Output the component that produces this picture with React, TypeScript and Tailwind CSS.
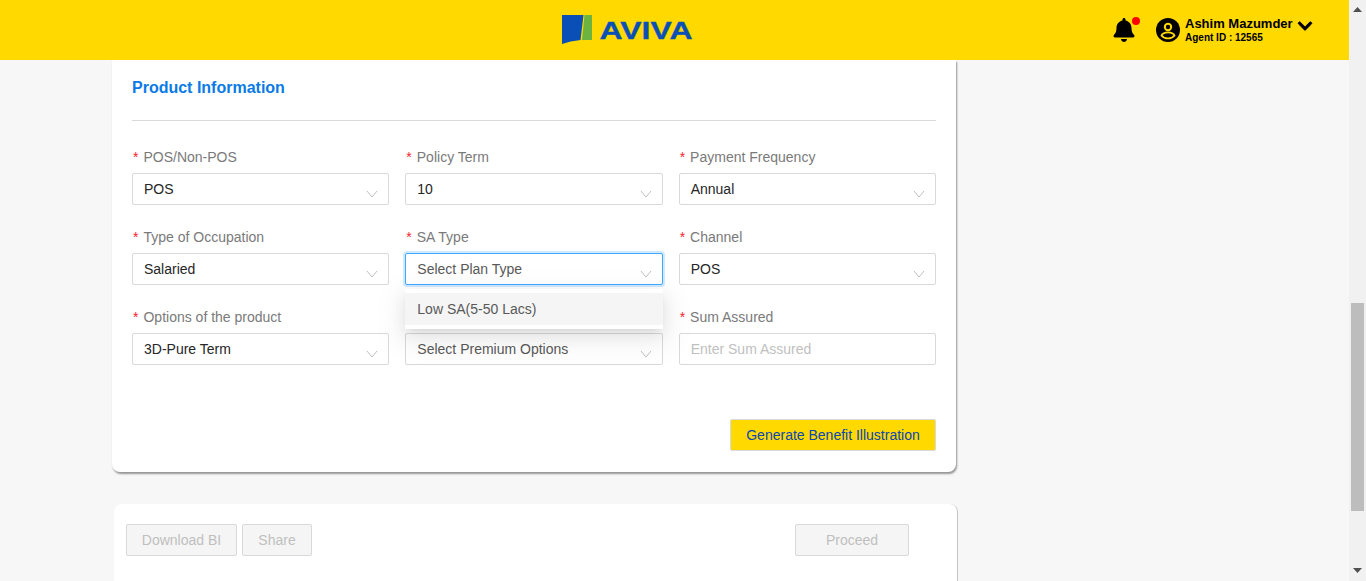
import { FaBell, FaChevronDown } from "react-icons/fa";

type Field = {
  label?: string;
  value: string;
  placeholder?: boolean;
  focused?: boolean;
  input?: boolean;
};

const fields: Field[] = [
  { label: "POS/Non-POS", value: "POS" },
  { label: "Policy Term", value: "10" },
  { label: "Payment Frequency", value: "Annual" },
  { label: "Type of Occupation", value: "Salaried" },
  { label: "SA Type", value: "Select Plan Type", placeholder: true, focused: true },
  { label: "Channel", value: "POS" },
  { label: "Options of the product", value: "3D-Pure Term" },
  // label sits behind the open dropdown
  { value: "Select Premium Options", placeholder: true },
  { label: "Sum Assured", value: "Enter Sum Assured", input: true },
];

function Logo() {
  return (
    <svg width="132" height="32" viewBox="0 0 132 32" className="block">
      <path d="M1 1 H22.5 L19.5 26 Q9 27 1 30 Z" fill="#0a4fb5" />
      <path d="M23.5 1 H31 V26 H21 Z" fill="#6cb33f" />
      <text
        x="38.5"
        y="25"
        fontFamily="'Liberation Sans', Arial, sans-serif"
        fontWeight="700"
        fontSize="23.5"
        textLength="93"
        lengthAdjust="spacingAndGlyphs"
        fill="#0a4fb5"
        stroke="#0a4fb5"
        strokeWidth="0.3"
      >
        AVIVA
      </text>
    </svg>
  );
}

function AvatarIcon() {
  return (
    <svg width="24" height="24" viewBox="0 0 24 24" className="ml-5 shrink-0">
      <circle cx="12" cy="12" r="12" fill="#000" />
      <circle cx="12" cy="9" r="3.2" fill="#000" stroke="#ffd900" strokeWidth="2" />
      <path
        d="M5.5 17.6 C6.5 15.4 9.5 14.4 12 14.4 C14.5 14.4 17.5 15.4 18.5 17.6 C16.8 19.5 14.5 20.4 12 20.4 C9.5 20.4 7.2 19.5 5.5 17.6 Z"
        fill="#000"
        stroke="#ffd900"
        strokeWidth="1.8"
      />
    </svg>
  );
}

function Header() {
  return (
    <header className="flex h-[60px] shrink-0 items-center bg-[#ffd900] pl-[561px]">
      <Logo />
      <div className="ml-[419px] flex items-center">
        <div className="relative h-6 w-6">
          <FaBell className="h-6 w-6 text-black" />
          <span className="absolute top-[-1px] -right-[4px] h-2 w-2 rounded-full bg-[#ff0000]" />
        </div>
        <AvatarIcon />
        <div className="ml-[5px] text-black">
          <div className="text-[13px] leading-[16px] font-bold">Ashim Mazumder</div>
          <div className="text-[10px] leading-[12px] font-bold">Agent ID : 12565</div>
        </div>
        <FaChevronDown
          className="mb-[8px] ml-[4px] h-4 w-4 text-black"
          stroke="currentColor"
          strokeWidth={30}
        />
      </div>
    </header>
  );
}

function SelectArrow() {
  return (
    <svg width="12" height="8" viewBox="0 0 12 8" className="mt-[10px] shrink-0">
      <path d="M1 1 L6 7 L11 1" fill="none" stroke="#bfbfbf" strokeWidth="1" />
    </svg>
  );
}

function FormField({ field }: { field: Field }) {
  const border = field.focused
    ? "border-[#40a9ff] shadow-[0_0_0_2px_rgba(24,144,255,0.2)]"
    : "border-[#d9d9d9]";
  const color = field.input
    ? "text-[#bfbfbf]"
    : field.placeholder
      ? "text-[#595959]"
      : "text-[#262626]";

  return (
    <div className="relative">
      <div className="mb-[6px] flex h-5 items-center text-[14px] text-[#7a7a7a]">
        {field.label && (
          <>
            <span className="mr-[5px] ml-px text-[#f5222d]">*</span>
            {field.label}
          </>
        )}
      </div>
      <div
        className={`flex h-8 items-center justify-between rounded-[2px] border bg-white pr-[10px] pl-[11px] text-[14px] ${border} ${color}`}
      >
        <span>{field.value}</span>
        {!field.input && <SelectArrow />}
      </div>
      {field.focused && (
        <div className="absolute top-[62px] right-0 left-0 z-10 bg-white py-1 shadow-[0_3px_6px_-4px_rgba(0,0,0,0.12),0_6px_16px_0_rgba(0,0,0,0.08),0_9px_28px_8px_rgba(0,0,0,0.05)]">
          <div className="flex h-8 items-center bg-[#f5f5f5] px-3 text-[14px] text-[#595959]">
            Low SA(5-50 Lacs)
          </div>
        </div>
      )}
    </div>
  );
}

function DisabledButton({ label, className }: { label: string; className: string }) {
  return (
    <button
      type="button"
      className={`h-8 rounded-[2px] border border-[#d9d9d9] bg-[#f5f5f5] text-[14px] text-[#bfbfbf] ${className}`}
    >
      {label}
    </button>
  );
}

function Scrollbar() {
  return (
    <div className="flex h-full w-[17px] shrink-0 flex-col items-center bg-[#f1f1f1]">
      <svg width="9" height="5" viewBox="0 0 9 5" className="mt-[7px] shrink-0">
        <path d="M4.5 0 L9 5 H0 Z" fill="#505050" />
      </svg>
      <div className="mt-[291px] h-[208px] w-[13px] bg-[#bdbdbd]" />
      <svg width="9" height="5" viewBox="0 0 9 5" className="mt-[57px] shrink-0">
        <path d="M0 0 H9 L4.5 5 Z" fill="#505050" />
      </svg>
    </div>
  );
}

export default function App() {
  return (
    <div
      className="flex h-[581px] overflow-hidden bg-[#f7f7f7]"
      style={{ fontFamily: "'Liberation Sans', Arial, sans-serif" }}
    >
      <div className="flex min-w-0 flex-1 flex-col">
        <Header />
        <main className="pl-[112px]">
          <section className="h-[412px] w-[844px] rounded-b-lg bg-white px-5 pt-[18px] shadow-[1px_2px_2px_rgba(0,0,0,0.4)]">
            <h2 className="h-5 text-[16px] leading-5 font-bold text-[#0a7ae6]">
              Product Information
            </h2>
            <div className="mt-[22px] h-px bg-[#d9d9d9]" />
            <div className="mt-[26px] grid grid-cols-3 gap-x-4 gap-y-[22px]">
              {fields.map((field) => (
                <FormField key={field.value + field.label} field={field} />
              ))}
            </div>
            <div className="mt-[54px] flex justify-end">
              <button
                type="button"
                className="h-8 w-[206px] rounded-[2px] border border-[#d9d9d9] bg-[#ffd900] text-[14px] text-[#0a46b4]"
              >
                Generate Benefit Illustration
              </button>
            </div>
          </section>
          <section className="mt-8 ml-[2px] flex h-[120px] w-[844px] items-start rounded-t-lg border-r border-[#c4c4c4] bg-white pt-5 pl-3">
            <DisabledButton label="Download BI" className="w-[111px]" />
            <DisabledButton label="Share" className="ml-[5px] w-[70px]" />
            <DisabledButton label="Proceed" className="ml-[483px] w-[114px]" />
          </section>
        </main>
      </div>
      <Scrollbar />
    </div>
  );
}
